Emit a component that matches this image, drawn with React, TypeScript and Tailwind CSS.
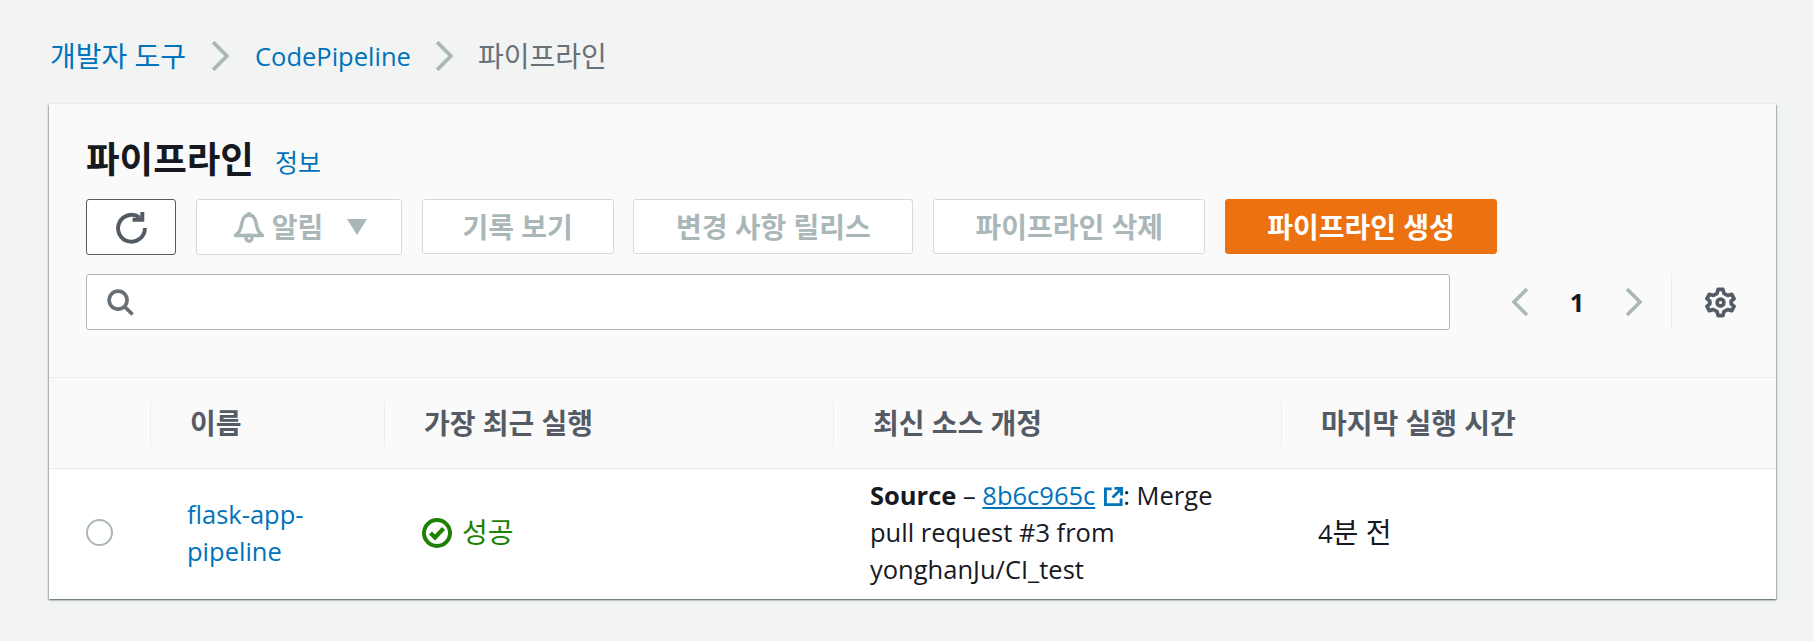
const KR = "font-['Open_Sans','Noto_Sans_CJK_KR',sans-serif]";

function Chevron({ dir = 'right', cls = '' }: { dir?: string; cls?: string }) {
  return (
    <svg viewBox="0 0 17 28" className={cls} fill="none" stroke="currentColor" strokeWidth="3.6">
      <path d={dir === 'right' ? 'M2 1 L15 14 L2 27' : 'M15 1 L2 14 L15 27'} />
    </svg>
  );
}

function Btn({ children, cls = '' }: { children: React.ReactNode; cls?: string }) {
  return (
    <div className={`flex h-[55px] items-center justify-center rounded-[3px] border text-[28px] font-bold ${cls}`}>
      {children}
    </div>
  );
}

const off = 'border-[#d5dbdb] bg-white text-[#aab7b8]';

export default function App() {
  return (
    <div className={`h-[641px] w-[1813px] overflow-hidden bg-[#f2f3f3] pl-[49px] pt-[36px] ${KR}`}>
      <div className="flex h-[40px] items-center text-[28px] text-[#0073bb]">
        <span className="w-[162px] pl-[1px]">개발자 도구</span>
        <Chevron cls="h-[30px] w-[18px] text-[#aab7b8]" />
        <span className="ml-[26px] w-[180px] text-[25.5px]">CodePipeline</span>
        <Chevron cls="h-[30px] w-[18px] text-[#aab7b8]" />
        <span className="ml-[25px] text-[#687078]">파이프라인</span>
      </div>

      <div className="mt-[28px] h-[495px] w-[1727px] bg-[#fafafa] shadow-[0_1px_2px_rgba(0,28,36,.5),1px_1px_1px_rgba(0,28,36,.15),-1px_1px_1px_rgba(0,28,36,.15)]">
        <div className="h-[274px] border-b border-[#eaeded] pl-[37px]">
          <div className="flex h-[95px] items-end pb-[18px]">
            <h1 className="text-[36.500px] font-bold leading-[44px] text-[#16191f]">파이프라인</h1>
            <a className="ml-[21px] text-[25px] leading-[38px] text-[#0073bb]">정보</a>
          </div>
          <div className="flex items-start gap-[19.800px]">
            <Btn cls="h-[56px] w-[90px] border-[#545b64] bg-white">
              <svg viewBox="0 0 32 32" className="h-[33px] w-[33px] text-[#545b64]" fill="none" stroke="currentColor" strokeWidth="3.8">
                <path d="M29 16.500a13 13 0 1 1-5-10" />
                <path d="M17 8.500 L26.500 8.500 L26.500 1" />
              </svg>
            </Btn>
            <Btn cls={`h-[56px] w-[206px] !justify-start pl-[36px] ${off}`}>
              <svg viewBox="0 0 32 32" className="h-[32px] w-[32px]" fill="none" stroke="currentColor" strokeWidth="3.400" strokeLinejoin="round">
                <path d="M2.500 24.500 C8 21 8 16 9 11.500 C10 6.500 13 4 16 4 C19 4 22 6.500 23 11.500 C24 16 24 21 29.500 24.500 Z" />
                <path d="M16 4 V1" />
                <circle cx="16" cy="27.200" r="3" />
              </svg>
              <span className="ml-[7px]">알림</span>
              <svg viewBox="0 0 20 16" className="ml-[24px] h-[16px] w-[20px]" fill="currentColor"><path d="M0 0 L20 0 L10 16 Z" /></svg>
            </Btn>
            <Btn cls={`w-[192px] ${off}`}>기록 보기</Btn>
            <Btn cls={`w-[280px] ${off}`}>변경 사항 릴리스</Btn>
            <Btn cls={`w-[272px] ${off}`}>파이프라인 삭제</Btn>
            <Btn cls="w-[272px] border-[#ec7211] bg-[#ec7211] text-white">파이프라인 생성</Btn>
          </div>
          <div className="mt-[19px] flex items-start">
            <div className="flex h-[56px] w-[1364px] items-center rounded-[3px] border border-[#aab7b8] bg-white pl-[20px]">
              <svg viewBox="0 0 28 28" className="h-[27px] w-[27px] text-[#687078]" fill="none" stroke="currentColor" strokeWidth="3.8">
                <circle cx="11.500" cy="11.500" r="9.300" />
                <path d="M18 18 L26.500 26.500" />
              </svg>
            </div>
            <div className="ml-[62px] flex h-[56px] w-[130px] items-center justify-between text-[#aab7b8]">
              <Chevron dir="left" cls="h-[28px] w-[17px]" />
              <span className="text-[25.5px] font-bold text-[#16191f]">1</span>
              <Chevron cls="h-[28px] w-[17px]" />
            </div>
            <div className="ml-[29px] h-[56px] w-px bg-[#eaeded]" />
            <div className="ml-[33px] flex h-[56px] items-center">
              <svg viewBox="0 0 32 32" className="h-[31px] w-[31px] text-[#545b64]" fill="none" stroke="currentColor" strokeWidth="3.800" strokeLinejoin="round">
                <path d="M13.500 2.500 H18.500 L19.500 6.500 L23.500 8.800 L27.500 7.500 L30 12 L27 14.700 V17.300 L30 20 L27.500 24.500 L23.500 23.200 L19.500 25.500 L18.500 29.500 H13.500 L12.500 25.500 L8.500 23.200 L4.500 24.500 L2 20 L5 17.300 V14.700 L2 12 L4.500 7.500 L8.500 8.800 L12.500 6.500 Z" />
                <circle cx="16" cy="16" r="3.500" />
              </svg>
            </div>
          </div>
        </div>

        <div className="grid h-[91px] grid-cols-[101px_234px_449px_448px_1fr] items-center border-b border-[#eaeded] text-[28px] font-bold text-[#545b64]">
          <div />
          {['이름', '가장 최근 실행', '최신 소스 개정', '마지막 실행 시간'].map((t) => (
            <div key={t} className="flex h-[45px] items-center border-l border-[#eaeded] pl-[39px]">{t}</div>
          ))}
        </div>

        <div className="grid h-[130px] grid-cols-[101px_234px_449px_448px_1fr] items-center bg-white pb-[3px] text-[25.5px] leading-[37px] text-[#16191f]">
          <div className="pl-[37px]">
            <div className="h-[27px] w-[27px] rounded-full border-[2px] border-[#aab7b8]" />
          </div>
          <a className="pl-[37px] text-[#0073bb]">flask-app-<br />pipeline</a>
          <div className="flex items-center pl-[38px] text-[#1d8102]">
            <svg viewBox="0 0 30 30" className="h-[30px] w-[30px]" fill="none" stroke="currentColor" strokeWidth="4">
              <circle cx="15" cy="15" r="13" />
              <path d="M8.500 15 L13 19.500 L21.500 10.500" strokeWidth="4.200" />
            </svg>
            <span className="ml-[10px] text-[28px]">성공</span>
          </div>
          <div className="pl-[37px]">
            <b>Source</b> – <a className="text-[#0073bb] underline">8b6c965c</a>
            <svg viewBox="0 0 20 20" className="ml-[9px] inline h-[19px] w-[19px] align-[-1px] text-[#0073bb]" fill="none" stroke="currentColor" strokeWidth="3">
              <path d="M8 2 H1.500 V18.500 H18 V12" />
              <path d="M11 1.500 H18.500 V9 M18 2 L9 11" />
            </svg>
            : Merge<br />pull request #3 from<br />yonghanJu/CI_test
          </div>
          <div className="pl-[37px]">4<span className="text-[28px]">분 전</span></div>
        </div>
      </div>
    </div>
  );
}
